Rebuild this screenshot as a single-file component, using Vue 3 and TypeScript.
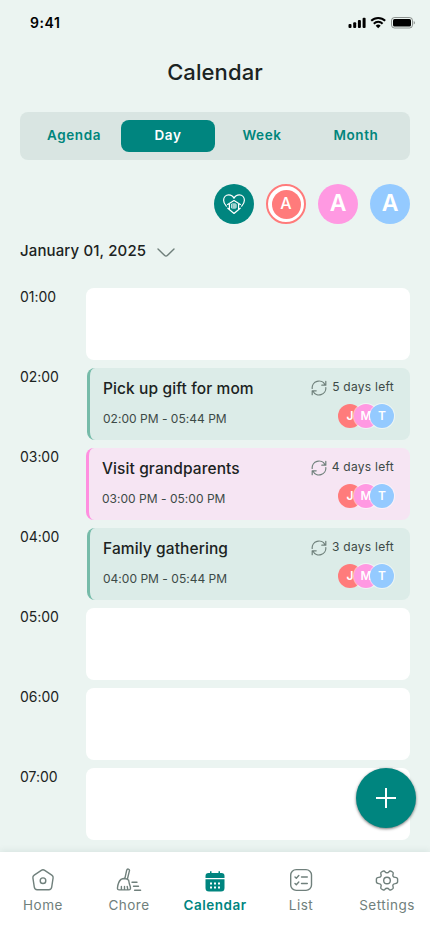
<script setup lang="ts">
interface CalendarEvent {
  title: string
  range: string
  left: string
  tone: 'green' | 'pink'
}
interface Slot {
  time: string
  event?: CalendarEvent
}

const views: string[] = ['Agenda', 'Day', 'Week', 'Month']
const activeView = 'Day'
const tabs: string[] = ['Home', 'Chore', 'Calendar', 'List', 'Settings']
const activeTab = 'Calendar'

const slots: Slot[] = [
  { time: '01:00' },
  { time: '02:00', event: { title: 'Pick up gift for mom', range: '02:00 PM - 05:44 PM', left: '5 days left', tone: 'green' } },
  { time: '03:00', event: { title: 'Visit grandparents', range: '03:00 PM - 05:00 PM', left: '4 days left', tone: 'pink' } },
  { time: '04:00', event: { title: 'Family gathering', range: '04:00 PM - 05:44 PM', left: '3 days left', tone: 'green' } },
  { time: '05:00' },
  { time: '06:00' },
  { time: '07:00' },
]
</script>

<template>
  <main class="screen">
    <div class="status">
      <span class="clock">9:41</span>
      <svg class="status-icons" width="68" height="14" viewBox="0 0 68 14">
        <rect x="1.5" y="8" width="3" height="4" rx="1" />
        <rect x="6.2" y="6.2" width="3" height="5.8" rx="1" />
        <rect x="10.9" y="4" width="3" height="8" rx="1" />
        <rect x="15.6" y="1.7" width="3" height="10.3" rx="1" />
        <g fill="none" stroke="#000" stroke-width="2">
          <path d="M24.2 4.8a10 10 0 0 1 14 0" />
          <path d="M26.8 7.7a6.2 6.2 0 0 1 8.8 0" />
        </g>
        <path d="M28.7 9.8a3.6 3.6 0 0 1 5 0l-2.5 2.5z" />
        <rect x="44.5" y="1.5" width="21" height="10.5" rx="3" fill="none" stroke="#000" stroke-opacity=".4" />
        <rect x="46" y="3" width="18" height="7.5" rx="1.5" />
        <path d="M66.7 5v3.6q1.300-.6 1.300-1.800T66.700 5z" opacity=".4" />
      </svg>
    </div>

    <h1 class="title">Calendar</h1>

    <div class="views">
      <button v-for="view in views" :key="view" class="view" :class="{ active: view === activeView }">{{ view }}</button>
    </div>

    <div class="members">
      <span class="member family">
        <svg width="24" height="24" viewBox="0 0 24 24" fill="none" stroke="#fff" stroke-width="1.2" stroke-linecap="round" stroke-linejoin="round">
          <path d="M4.300 14.200C2.400 12 1.600 10.100 1.600 8.200 1.600 5 3.900 2.900 6.700 2.900c2.300 0 4.300 1.400 5.300 3.400 1-2 3-3.400 5.300-3.400 2.800 0 5.100 2.100 5.100 5.300 0 1.900-.8 3.800-2.700 6" />
          <path d="M5.600 12.400L12 8.600l6.400 3.800M7.400 12v5.500M16.600 12v5.500M5.800 16.200l6.200 5.300 6.200-5.300" />
          <path d="M10 12h4v4h-4zM12 12v4M10 14h4" stroke-width=".8" />
        </svg>
      </span>
      <span class="member selected"><span class="inner">A</span></span>
      <span class="member pink">A</span>
      <span class="member blue">A</span>
    </div>

    <div class="date">
      <span>January 01, 2025</span>
      <svg width="20" height="12" viewBox="0 0 20 12" fill="none" stroke="#6f7f7b" stroke-width="1.4" stroke-linecap="round" stroke-linejoin="round">
        <path d="M2 2l6.700 6.600a1.800 1.800 0 0 0 2.600 0L18 2" />
      </svg>
    </div>

    <section class="slots">
      <div v-for="slot in slots" :key="slot.time" class="slot">
        <span class="hour">{{ slot.time }}</span>
        <article v-if="slot.event" class="card event" :class="slot.event.tone">
          <div class="info">
            <h2>{{ slot.event.title }}</h2>
            <p>{{ slot.event.range }}</p>
          </div>
          <div class="meta">
            <div class="left">
              <svg width="16" height="16" viewBox="0 0 16 16" fill="none" stroke="#6f807b" stroke-width="1.2" stroke-linecap="round" stroke-linejoin="round">
                <path d="M1.200 8.500A6.800 6.800 0 0 1 14 4.700M14.800 1.300v3.900h-4M14.800 7.500A6.800 6.800 0 0 1 2 11.300M1.200 14.700v-3.900h4" />
              </svg>
              <span>{{ slot.event.left }}</span>
            </div>
            <div class="people">
              <span class="person red">J</span>
              <span class="person pink">M</span>
              <span class="person blue">T</span>
            </div>
          </div>
        </article>
        <div v-else class="card"></div>
      </div>
    </section>

    <button class="add" aria-label="Add">
      <svg width="20" height="20" viewBox="0 0 20 20" stroke="#fff" stroke-width="2"><path d="M10 0v20M0 10h20" /></svg>
    </button>

    <nav class="tabs">
      <div v-for="tab in tabs" :key="tab" class="tab" :class="{ active: tab === activeTab }">
        <svg width="26" height="26" viewBox="0 0 26 26" fill="none" stroke="currentColor" stroke-width="1.4" stroke-linecap="round" stroke-linejoin="round">
          <template v-if="tab === 'Home'">
            <path d="M11.300 2.300L4.200 7.100q-1.600 1.100-1.300 2.800l1.400 9.300q.4 2.500 2.800 2.500h11.800q2.400 0 2.800-2.500l1.400-9.300q.3-1.700-1.300-2.800l-7.100-4.800q-1.700-1.100-3.400 0z" />
            <circle cx="13" cy="12.7" r="2.8" />
          </template>
          <template v-else-if="tab === 'Chore'">
            <path d="M8.800 10.900l1.900-8.700q.4-1.400 1.700-1.100 1.400.4 1 1.800l-2.100 8.600M5 11.400q3.600-2.200 7.600.6.600 4 1.500 6 1.200 3.900-1.500 3.900H3.200q-2 0-1.700-2.100.5-5.800 3.500-8.400zM5.400 21.700v-3.300M8.500 21.700v-3.300M11.800 21.700l-.6-3.300M16 14.200h5M17.500 18.300h5M18.600 22.200h6" />
          </template>
          <template v-else-if="tab === 'Calendar'">
            <path d="M3.500 10V8q0-3 3-3H8V3.200h1.500V5h7V3.200H18V5h1.500q3 0 3 3v2zM3.500 11.300h19v8.700q0 3.500-3.500 3.500H7q-3.500 0-3.500-3.500z" fill="currentColor" stroke="none" />
            <path d="M8 15.500h2M12 15.500h2M16 15.500h2M8 19.500h2M12 19.500h2M16 19.500h2" stroke="#fff" stroke-width="2" stroke-linecap="butt" />
          </template>
          <template v-else-if="tab === 'List'">
            <rect x="2.700" y="1.600" width="20.800" height="20.800" rx="5.500" />
            <path d="M7 9l1.300 1.200 2.500-2.700M7 15.500l1.300 1.200 2.500-2.700M13.500 9h5.800M13.500 15.500h5.800" />
          </template>
          <template v-else>
            <circle cx="13" cy="12.5" r="3.3" />
            <path d="M13 4.800Q14.300 4.800 14.900 3.800 15.700 2.500 16.900 3.100L18.500 4Q19.700 4.800 19.100 6.100 18.500 7.400 19.100 8.300 19.700 9.300 21.200 9.400 23.600 9.600 23.600 11.200V13.800Q23.600 15.400 21.200 15.600 19.700 15.700 19.100 16.700 18.500 17.600 19.100 18.900 19.700 20.200 18.500 21L16.900 21.900Q15.700 22.500 14.900 21.200 14.300 20.200 13 20.200 11.700 20.200 11.100 21.200 10.300 22.500 9.100 21.900L7.500 21Q6.300 20.200 6.900 18.900 7.500 17.600 6.900 16.700 6.300 15.700 4.800 15.600 2.400 15.400 2.400 13.800V11.200Q2.400 9.600 4.800 9.400 6.300 9.300 6.900 8.300 7.500 7.400 6.900 6.100 6.300 4.800 7.500 4L9.100 3.100Q10.300 2.500 11.100 3.800 11.700 4.800 13 4.800z" />
          </template>
        </svg>
        <span>{{ tab }}</span>
      </div>
    </nav>
  </main>
</template>

<style>
body {
  margin: 0;
}
</style>

<style scoped>
.screen {
  position: relative;
  display: flex;
  flex-direction: column;
  box-sizing: border-box;
  width: 430px;
  height: 932px;
  overflow: hidden;
  background: #ebf4f1;
  color: #1b2322;
  font-family: Inter, 'Liberation Sans', sans-serif;
}
button {
  font: inherit;
  border: 0;
  padding: 0;
}
.status {
  display: flex;
  justify-content: space-between;
  box-sizing: border-box;
  height: 46px;
  padding: 15px 15px 0 30px;
  color: #000;
}
.clock {
  font-size: 14px;
  font-weight: 600;
  line-height: 16px;
  letter-spacing: 0.6px;
}
.status-icons {
  margin-top: 1px;
}
.title {
  margin: 11px 0 0;
  height: 30px;
  line-height: 30px;
  text-align: center;
  font-size: 22px;
  font-weight: 500;
  letter-spacing: 0.1px;
}
.views {
  display: grid;
  grid-template-columns: repeat(4, 94px);
  justify-content: center;
  box-sizing: border-box;
  height: 48px;
  margin: 25px 20px 0;
  padding: 8px 7px;
  border-radius: 8px;
  background: #d9e5e2;
}
.view {
  box-sizing: border-box;
  height: 32px;
  padding-bottom: 2px;
  border-radius: 8px;
  background: transparent;
  color: #00857c;
  font-size: 13.5px;
  line-height: 30px;
  font-weight: 600;
  letter-spacing: 0.6px;
}
.view.active {
  background: #00857f;
  color: #fff;
}
.members {
  display: flex;
  justify-content: flex-end;
  gap: 12px;
  height: 40px;
  margin: 24px 20px 0;
}
.member {
  display: flex;
  align-items: center;
  justify-content: center;
  box-sizing: border-box;
  width: 40px;
  height: 40px;
  border-radius: 50%;
  color: #fff;
  font-size: 23px;
  line-height: 38px;
  font-weight: 600;
}
.member.pink,
.member.blue {
  padding-bottom: 2px;
}
.family {
  background: #00857f;
}
.selected {
  border: 2px solid #ff7b7b;
  background: #fff;
}
.inner {
  width: 29px;
  height: 29px;
  border-radius: 50%;
  background: #ff7b7b;
  text-align: center;
  font-size: 16px;
  line-height: 27px;
  font-weight: 500;
}
.pink {
  background: #ff99e2;
}
.blue {
  background: #94caff;
}
.red {
  background: #ff7b7b;
}
.date {
  display: flex;
  align-items: center;
  gap: 10px;
  height: 24px;
  margin: 14px 20px 0;
  font-size: 15px;
  font-weight: 500;
  letter-spacing: 0.13px;
}
.date svg {
  margin-top: 5px;
}
.slots {
  display: grid;
  gap: 8px;
  margin: 26px 20px 0;
}
.slot {
  display: grid;
  grid-template-columns: 66px 1fr;
  height: 72px;
}
.hour {
  font-size: 14px;
  line-height: 18px;
  letter-spacing: -0.05px;
}
.card {
  box-sizing: border-box;
  height: 72px;
  border-radius: 8px;
  background: #fff;
}
.event {
  display: flex;
  justify-content: space-between;
  padding: 11px 16px 0 13px;
  border-left: 3px solid;
}
.event.green {
  margin-left: 1px;
  border-color: #76bba9;
  background: #dcece8;
}
.event.pink {
  border-color: #ff8fe0;
  background: #f6e5f3;
}
.info h2 {
  margin: 0;
  font-size: 15.5px;
  line-height: 20px;
  font-weight: 500;
  letter-spacing: 0.1px;
}
.info p {
  margin: 11px 0 0;
  font-size: 12px;
  line-height: 18px;
  letter-spacing: 0.02px;
  color: #3c4a47;
}
.meta {
  display: flex;
  flex-direction: column;
  align-items: flex-end;
}
.left {
  display: flex;
  gap: 5px;
  height: 16px;
  color: #3c4a47;
  font-size: 12px;
  line-height: 16px;
  letter-spacing: 0.27px;
}
.left svg {
  margin-top: 1px;
}
.people {
  display: flex;
  margin-top: 9px;
}
.person {
  width: 24px;
  height: 24px;
  border-radius: 50%;
  box-shadow: 0 0 0 1px rgba(255, 255, 255, 0.5);
  color: #fff;
  text-align: center;
  font-size: 12px;
  line-height: 24px;
  font-weight: 600;
}
.person.red {
  box-shadow: none;
}
.person + .person {
  margin-left: -8px;
}
.add {
  position: absolute;
  left: 356px;
  top: 768px;
  display: grid;
  place-items: center;
  width: 60px;
  height: 60px;
  border-radius: 50%;
  background: #00857f;
  box-shadow: 0 1px 3px rgba(0, 0, 0, 0.55);
}
.tabs {
  display: grid;
  grid-template-columns: repeat(5, 86px);
  height: 80px;
  margin-top: auto;
  flex: none;
  background: #fff;
  box-shadow: 0 -1px 7px rgba(0, 60, 50, 0.09);
}
.tab {
  display: flex;
  flex-direction: column;
  align-items: center;
  padding-top: 16px;
  color: #70807c;
  font-size: 13.5px;
  letter-spacing: 0.5px;
}
.tab span {
  margin-top: 2px;
  line-height: 18px;
}
.tab.active {
  color: #00857f;
  font-weight: 600;
}
</style>
